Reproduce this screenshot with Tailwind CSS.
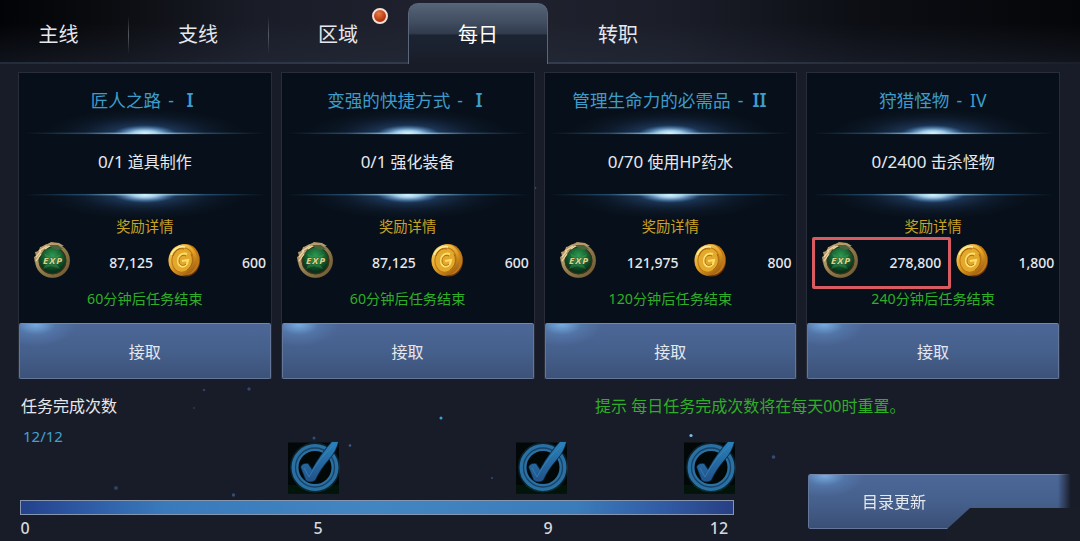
<!DOCTYPE html>
<html lang="zh-CN">
<head>
<meta charset="UTF-8">
<meta name="viewport" content="width=device-width, initial-scale=1.0">
<title>每日任务</title>
<script src="https://cdn.jsdelivr.net/npm/@tailwindcss/browser@4"></script>
</head>
<body class="bg-[#181c28]">
<!-- Shared gradients and icons -->
<svg class="absolute w-0 h-0" aria-hidden="true">
<defs>
<radialGradient id="glowWide">
<stop offset="0" stop-color="#5a96d6" stop-opacity=".85"/><stop offset=".3" stop-color="#335f98" stop-opacity=".5"/><stop offset=".65" stop-color="#20375c" stop-opacity=".25"/><stop offset="1" stop-color="#16243c" stop-opacity="0"/>
</radialGradient>
<radialGradient id="glowCore">
<stop offset="0" stop-color="#f4ffff"/><stop offset=".4" stop-color="#b4def6" stop-opacity=".85"/><stop offset="1" stop-color="#4c8bcb" stop-opacity="0"/>
</radialGradient>
<linearGradient id="glowLine">
<stop offset="0" stop-color="#28577c" stop-opacity="0"/><stop offset=".25" stop-color="#28577c" stop-opacity=".8"/><stop offset=".5" stop-color="#c9f0ff"/><stop offset=".75" stop-color="#28577c" stop-opacity=".8"/><stop offset="1" stop-color="#28577c" stop-opacity="0"/>
</linearGradient>
<linearGradient id="ring" x2="1" y2="1">
<stop offset="0" stop-color="#d8bf8c"/><stop offset=".5" stop-color="#8f7a4d"/><stop offset="1" stop-color="#6d5733"/>
</linearGradient>
<radialGradient id="gem" cx=".5" cy=".35">
<stop offset="0" stop-color="#2f9a52"/><stop offset=".6" stop-color="#14602f"/><stop offset="1" stop-color="#0a3219"/>
</radialGradient>
<linearGradient id="gold" x2="1" y2="1">
<stop offset="0" stop-color="#ffe173"/><stop offset=".5" stop-color="#e2a024"/><stop offset="1" stop-color="#8a4a0c"/>
</linearGradient>
<linearGradient id="blueTick" x2="0" y2="1">
<stop offset="0" stop-color="#2b80ba"/><stop offset="1" stop-color="#215389"/>
</linearGradient>
</defs>
<symbol id="glow" viewBox="0 0 240 30" preserveAspectRatio="none">
<ellipse cx="120" cy="28" rx="100" ry="25" fill="url(#glowWide)"/>
<ellipse cx="120" cy="28" rx="32" ry="9" fill="url(#glowCore)"/>
<rect y="26.600" width="240" height="1.600" fill="url(#glowLine)"/>
<rect y="28.200" width="240" height="2" fill="#07101a"/>
</symbol>
<symbol id="coin" viewBox="0 0 34 36">
<ellipse cx="18.5" cy="19" rx="14.5" ry="15.5" fill="#70350b"/>
<ellipse cx="18.5" cy="17.5" rx="14" ry="15.5" fill="#c07a17"/>
<ellipse cx="15.7" cy="18" rx="14.2" ry="15.8" fill="url(#gold)" transform="rotate(12 15.7 18)"/>
<ellipse cx="15.5" cy="18" rx="10.5" ry="12.2" fill="#e3a92c" stroke="#b97413" stroke-width="1" transform="rotate(12 15.5 18)"/>
<path d="M20 12c-5-2-9 2-9 7 0 6 6 7 9 3l1-4-6 1" fill="none" stroke="#ffdf6a" stroke-width="2"/>
<path d="M19 14c-4-2-7 1-7 5s4 6 7 3m5-10c3 7 1 12-4 16M6 14c2-6 6-8 11-7" fill="none" stroke="#a5630d" stroke-width=".9"/>
<path d="M4 13c3-7 8-9 14-8" fill="none" stroke="#fff0a0" stroke-width="1.300"/>
</symbol>
<symbol id="tick" viewBox="0 0 54 54">
<rect x="1" y="1.500" width="51" height="51" fill="#020807"/>
<rect x="1" y="44" width="51" height="8.500" fill="#03180a" opacity=".8"/>
<circle cx="28" cy="26.500" r="22" fill="none" stroke="#174c6e" stroke-width="6" opacity=".4"/>
<circle cx="28" cy="26.500" r="20" fill="none" stroke="#2a70a2" stroke-width="7"/>
<circle cx="28" cy="26.500" r="19.500" fill="none" stroke="#174268" stroke-width="1.300"/>
<path d="M14 26q2-4 7-3l4 6Q34 13 45 1l6 0q-2 9-9 17Q33 28 28 39q-4 3-9 0z" fill="url(#blueTick)" stroke="#0a2a44" stroke-width="1.500" paint-order="stroke"/>
<path d="M17 27l5 9q9-18 25-32" fill="none" stroke="#3a8cc4" stroke-width="1" opacity=".6"/>
</symbol>
</svg>

<div class="relative w-[1080px] h-[541px] overflow-hidden bg-[#181c28] font-['Noto_Sans','Noto_Sans_CJK_SC',sans-serif] text-[#e6e8ee]">
<!-- Background sparks -->
<svg class="absolute inset-0" width="1080" height="541" fill="#3c5a86">
<circle cx="441" cy="418" r="1.5" fill="#3ba0d8"/><circle cx="691" cy="435.500" r="1.600" fill="#79bde0"/>
<circle cx="249" cy="389" r="1.700" opacity=".7"/><circle cx="204" cy="390" r="1.300" opacity=".6"/>
<circle cx="194" cy="408" r="1" opacity=".5"/><circle cx="314" cy="438" r="1.500" opacity=".8"/>
<circle cx="350" cy="445.500" r="1.300"/><circle cx="116" cy="488" r="2" opacity=".6"/>
<circle cx="233.500" cy="495" r="1.700" opacity=".8"/><circle cx="773.500" cy="457" r="1.800" opacity=".8"/>
<circle cx="535" cy="188" r="1.300" opacity=".7"/><circle cx="492" cy="478" r="1" opacity=".8"/>
</svg>

<!-- Tabs -->
<div class="relative flex h-16 text-[20px] leading-[28px] bg-[linear-gradient(to_bottom,#0000_0%,#0000_35%,#2b334655_100%),linear-gradient(to_right,#020306_0%,#0b0c10_10%,#1a1d28_24%,#20232f_45%,#1b1e29_62%,#0c0e14_80%,#050609_100%)]">
<div class="absolute inset-x-0 bottom-0 h-0.5 bg-[linear-gradient(to_right,#222c3a,#323c4d_40%,#333c4c_60%,#1b2028)]"></div>
<div class="w-[128px] pr-[11px] pt-[21px] text-center">主线</div>
<div class="relative w-[140px] pt-[21px] text-center">支线
<i class="absolute left-0 top-4 h-[38px] w-px bg-linear-to-b from-transparent via-[#555963] to-transparent"></i></div>
<div class="relative w-[140px] pt-[21px] text-center">区域
<i class="absolute left-0 top-4 h-[38px] w-px bg-linear-to-b from-transparent via-[#555963] to-transparent"></i>
<i class="absolute left-[104px] top-2 size-4 rounded-full border-2 border-[#f3dfd8] bg-[radial-gradient(circle_at_40%_30%,#e87b43,#b93a12_60%,#7c2208)]"></i></div>
<div class="relative mt-[3px] w-[140px] rounded-t-[10px] border border-b-0 border-[#59667b] pt-[17px] text-center text-white bg-[linear-gradient(to_bottom,#566477_0%,#414d60_30%,#303b4d_49%,#1c2431_52%,#1b212e_75%,#181c28_100%)]">每日</div>
<div class="w-[140px] pt-[21px] text-center">转职</div>
</div>

<!-- Quest cards, filled from the list below -->
<div id="cards" class="relative mt-2 ml-[18px] grid w-[1042px] grid-cols-4 gap-[9px]"></div>

<!-- Completion count -->
<div class="relative flex h-[48px] pl-[21px] pt-[15px] text-[16px] leading-6">
<div class="w-[574px]">任务完成次数</div>
<div class="text-[#2fae27] whitespace-nowrap">提示 每日任务完成次数将在每天00时重置。</div>
</div>
<div class="relative flex">
<div class="w-[808px]">
<div class="pl-[23px] h-[14px] text-[15px] leading-[18px] text-[#3ea2d2]">12/12</div>
<div class="flex pl-[287px]">
<svg class="size-[54px]"><use href="#tick"/></svg>
<svg class="ml-[174px] size-[54px]"><use href="#tick"/></svg>
<svg class="ml-[114px] size-[54px]"><use href="#tick"/></svg>
</div>
<div class="mt-[5px] ml-[20px] h-[15px] w-[714px] border border-[#8795ad] bg-[linear-gradient(to_right,#24408a_0%,#2b529d_6%,#397abb_20%,#4286c1_50%,#3b7cba_78%,#315ca5_90%,#283f83_100%)]"></div>
<div class="flex text-[16px] leading-[26px] font-medium text-[#d5d8de]">
<div class="w-[50px] text-center">0</div>
<div class="ml-[243px] w-[50px] text-center">5</div>
<div class="ml-[180px] w-[50px] text-center">9</div>
<div class="ml-[121px] w-[50px] text-center">12</div>
</div>
</div>
<!-- Refresh button with the slanted dark corner over it -->
<div class="relative mt-[47px] h-[68px] w-[272px]">
<div class="h-[55px] w-[263px] rounded-[2px] border border-r-0 border-[#64769a] border-t-[#7787a8] pl-[53px] text-[16px] leading-[54px] bg-[radial-gradient(ellipse_40px_22px_at_16px_0,#79aee2,#5b86bd77_50%,#4c679600),linear-gradient(to_bottom,#4c6797,#46608d_50%,#3a4f75)] mask-[linear-gradient(to_right,#000_95%,transparent)]">目录更新</div>
<svg class="absolute left-[138px] top-[34px]" width="134" height="34"><path d="M0 22 24 0H134V34H0Z" fill="#181d28"/></svg>
</div>
</div>
</div>

<script>
const quests = [
  { title: "匠人之路", rank: "I", count: "0/1", goal: "道具制作", exp: "87,125", gold: "600", mins: 60 },
  { title: "变强的快捷方式", rank: "I", count: "0/1", goal: "强化装备", exp: "87,125", gold: "600", mins: 60 },
  { title: "管理生命力的必需品", rank: "II", count: "0/70", goal: "使用HP药水", exp: "121,975", gold: "800", mins: 120 },
  { title: "狩猎怪物", rank: "IV", count: "0/2400", goal: "击杀怪物", exp: "278,800", gold: "1,800", mins: 240, marked: true }
];
document.getElementById('cards').innerHTML = quests.map(q => `
<div class="relative h-[307px] border border-[#292d39] bg-[#07101a] text-center whitespace-nowrap">
<div class="h-[33px] pt-[14px] text-[17.6px] leading-[26px] [word-spacing:2.5px] text-[#3d9cca]">${q.title} - <span class="inline-block w-[18px] text-center ${q.rank === 'IV' ? '' : 'font-semibold text-[19px]'}">${q.rank}</span></div>
<svg class="mx-auto h-[30px] w-[240px]"><use href="#glow"/></svg>
<div class="h-[56px] pt-[14px] text-[16px] leading-6"><span class="text-[17px]">${q.count}</span> ${q.goal}</div>
<svg class="mx-auto h-[30px] w-[240px] -scale-y-100"><use href="#glow"/></svg>
<div class="relative -mt-[5px] h-[24px] pt-px text-[14.3px] leading-[18px] text-[#c9a227]">奖励详情</div>
<div class="flex h-[38px] items-center text-[14px] font-medium">
<svg class="ml-[13px] size-[40px] shrink-0" viewBox="0 0 40 40">
<circle cx="20.500" cy="20.500" r="17.700" fill="#2a2013"/>
<circle cx="20.500" cy="20.500" r="15.600" fill="url(#gem)" stroke="url(#ring)" stroke-width="3.500"/>
<circle cx="20.500" cy="20.500" r="13.300" fill="none" stroke="#3c3219" stroke-width="1.200"/>
<path d="M3 23 2 17l2-1-1-4 4-1 1-4 5-1 6-4 8 1 5 3-6 0-8 0-6 4-4 6z" fill="#b79a69"/>
<path d="m4 17 5-6m-2 0 8-5m-2 3 6-4M4 21l5-7" stroke="#ecd7a5" stroke-width="1.200" fill="none"/>
<path d="M17 5h9l5 4-6 1-5-2z" fill="#49643c"/>
<path d="m12 13 8 5 9-4-4 10 3 5-9-3-8 3 4-8z" fill="#50b86c" opacity=".28"/>
<text x="21" y="24" text-anchor="middle" font-size="9.500" font-weight="800" font-style="italic" letter-spacing="1" fill="#d8cf88" stroke="#16391b" stroke-width=".7" paint-order="stroke">EXP</text>
</svg>
<div class="w-[81px] pt-[4px] text-right">${q.exp}</div>
<svg class="ml-[14px] h-[36px] w-[34px] shrink-0"><use href="#coin"/></svg>
<div class="w-[65px] pt-[4px] text-right">${q.gold}</div>
</div>
<div class="pt-[10px] text-[14.2px] leading-5 text-[#2fae27]">${q.mins}分钟后任务结束</div>
<div class="absolute inset-x-0 -bottom-px h-[56px] rounded-[2px] border border-[#64769a] border-t-[#7787a8] text-[16px] leading-[56px] bg-[radial-gradient(ellipse_40px_22px_at_16px_0,#79aee2,#5b86bd77_50%,#4c679600),linear-gradient(to_bottom,#4c6796,#46608d_50%,#3c5278)]">接取</div>
${q.marked ? '<div class="absolute left-[5px] top-[164px] h-[52px] w-[139px] rounded-[2px] border-3 border-[#d95b62]"></div>' : ''}
</div>`).join('');
</script>
</body>
</html>
